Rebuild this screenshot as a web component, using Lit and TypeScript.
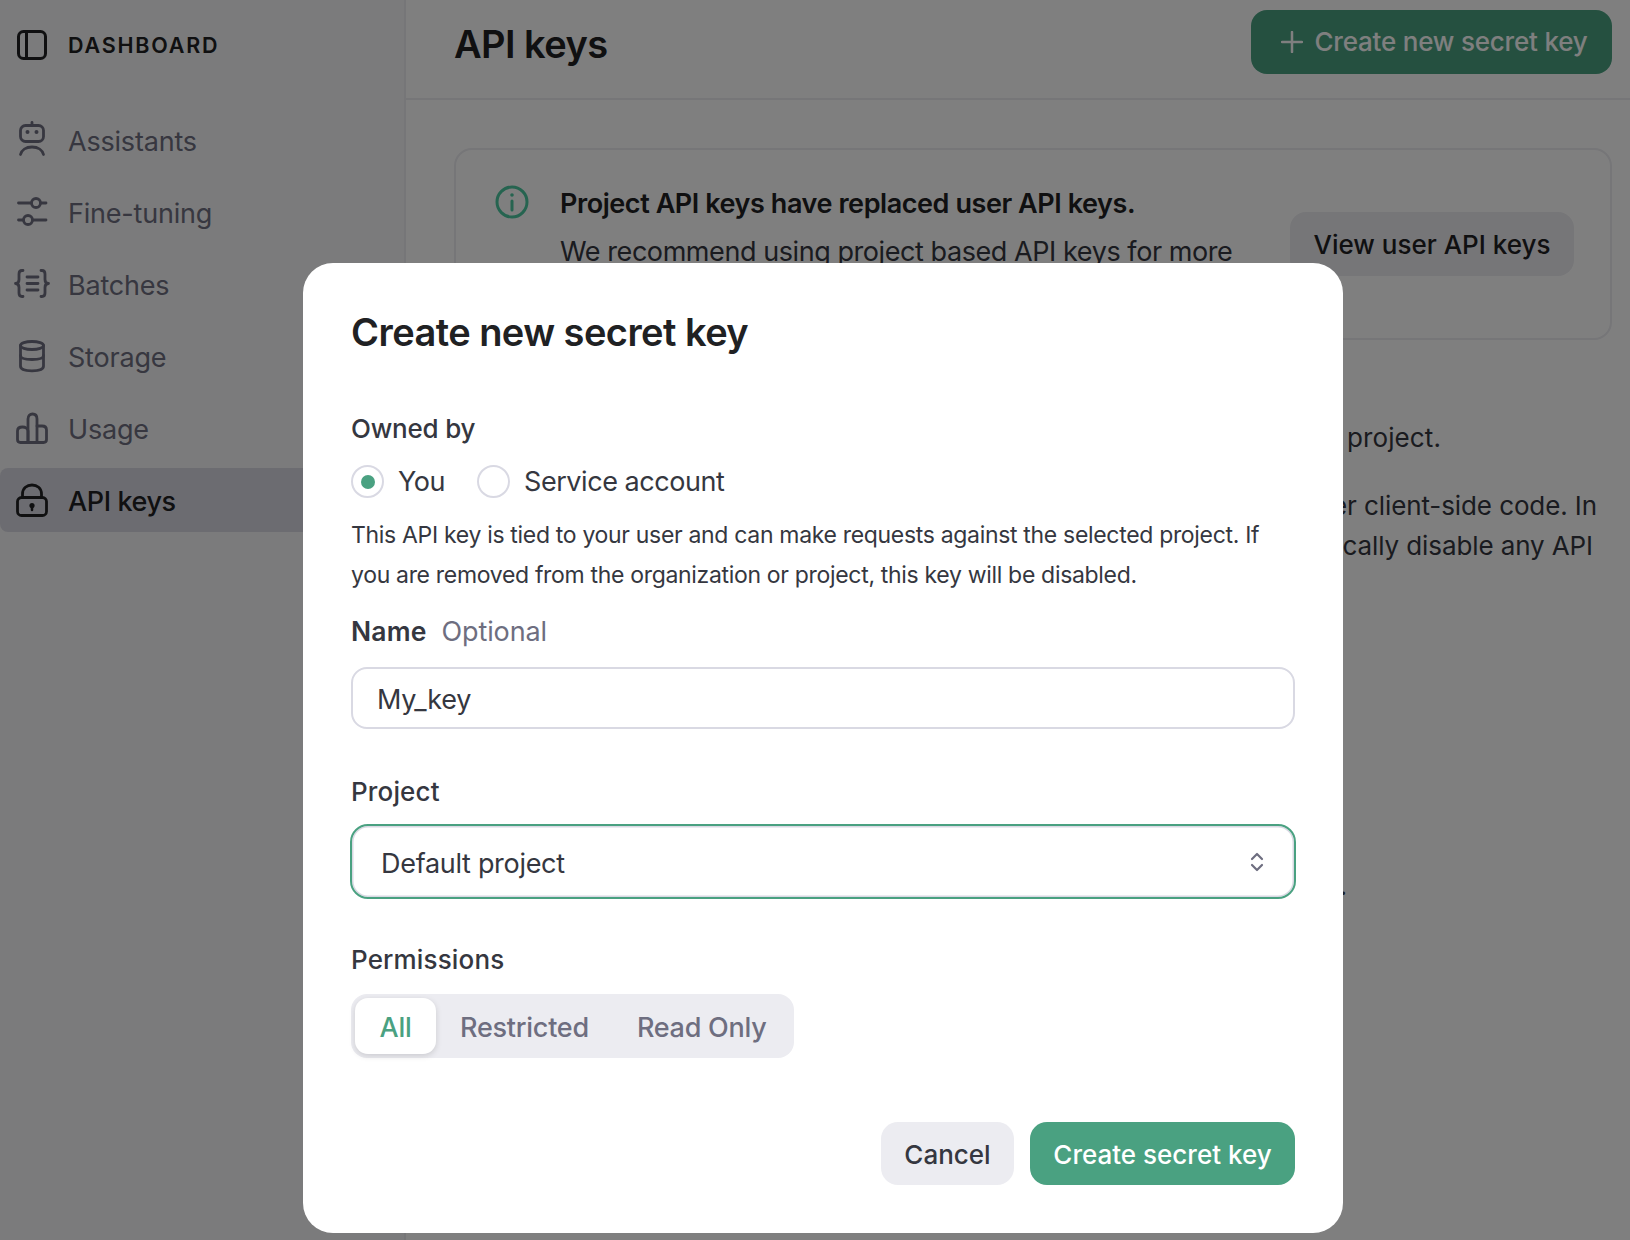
import { LitElement, html, css, svg } from "lit";
import { customElement } from "lit/decorators.js";

const ic = (body: unknown) => html`<svg class="ic" viewBox="0 0 36 36" width="36" height="36" fill="none" stroke="currentColor" stroke-width="2.800" stroke-linecap="round" stroke-linejoin="round">${body}</svg>`;

const icons: Record<string, unknown> = {
  Assistants: svg`<rect x="6.500" y="2.500" width="23" height="16" rx="5"/><path d="M18 -0.500V2.500"/><circle cx="13.500" cy="9" r="2" fill="currentColor" stroke="none"/><circle cx="22.500" cy="9" r="2" fill="currentColor" stroke="none"/><path d="M6.500 31.500C7.500 27 12 24 18 24C24 24 28.500 27 29.500 31.500"/>`,
  "Fine-tuning": svg`<path d="M4.500 8H17M27 8H32"/><circle cx="22" cy="8" r="4.500"/><path d="M4.500 25H9M19 25H32"/><circle cx="14" cy="25" r="4.500"/>`,
  Batches: svg`<path d="M9 3.500H8C5.800 3.500 5 5 5 7V12.500C5 15 4 16.500 1.500 16.500C4 16.500 5 18 5 20.500V26C5 28 5.800 29.500 8 29.500H9"/><path d="M27 3.500H28C30.200 3.500 31 5 31 7V12.500C31 15 32 16.500 34.500 16.500C32 16.500 31 18 31 20.500V26C31 28 30.200 29.500 28 29.500H27"/><path d="M13 10H24M13 16.500H24M13 23H24"/>`,
  Storage: svg`<ellipse cx="18" cy="6.500" rx="11.500" ry="4"/><path d="M6.500 6.500V27C6.500 30.500 11 31.800 18 31.800C25 31.800 29.500 30.500 29.500 27V6.500"/><path d="M6.500 16.500C6.500 19.500 11 20.500 18 20.500C25 20.500 29.500 19.500 29.500 16.500"/>`,
  Usage: svg`<path d="M14 31.500H6.500C4.500 31.500 3.500 30.500 3.500 28.500V20C3.500 17.500 5.500 16 8.500 16C11.500 16 14 17.500 14 20V31.500Z"/><path d="M14 31.500V8C14 4.500 16 3 18.500 3C21 3 23 4.500 23 8V31.500Z"/><path d="M23 15H28C31 15 32.500 16.500 32.500 19V28.500C32.500 30.500 31.500 31.500 29.500 31.500H23"/>`,
  "API keys": svg`<rect x="3.500" y="14.500" width="29" height="18" rx="4"/><path d="M8.500 14.500V11C8.500 5 13 2 18 2C23 2 27.500 5 27.500 11V14.500"/><circle cx="18" cy="22.500" r="2.600" fill="currentColor" stroke="none"/><path d="M18 23V27" stroke-width="2.500"/>`,
};

const nav = ["Assistants", "Fine-tuning", "Batches", "Storage", "Usage", "API keys"];

@customElement("app-root")
export class AppRoot extends LitElement {
  static styles = css`
    :host {
      display: block;
      position: relative;
      width: 1630px;
      height: 1240px;
      overflow: hidden;
      background: #fff;
      font-family: Inter, "Liberation Sans", sans-serif;
      color: #353740;
      --green: #4aa181;
      --line: #ececf1;
    }
    * { box-sizing: border-box; }
    .page { display: flex; height: 1240px; }
    .side {
      width: 406px;
      flex: none;
      background: #f7f7f8;
      border-right: 2px solid var(--line);
    }
    .brand {
      height: 90px;
      display: flex;
      align-items: center;
      gap: 21px;
      padding-left: 17px;
      color: #202123;
      font-size: 21.500px;
      font-weight: 600;
      letter-spacing: 1.800px;
    }
    .nav { margin-top: 18px; display: flex; flex-direction: column; gap: 8px; }
    .item {
      height: 64px;
      display: flex;
      align-items: center;
      gap: 18px;
      padding: 2px 0 0 14px;
      border-radius: 8px;
      color: #6e6e80;
      font-size: 27px;
      letter-spacing: -0.200px;
    }
    .item .ic { overflow: visible; }
    .item.on { background: #d9d9e3; color: #202123; font-weight: 500; letter-spacing: -0.400px; }
    .ic { flex: none; display: block; }
    .main { flex: 1; min-width: 0; }
    .head {
      height: 100px;
      display: flex;
      justify-content: space-between;
      align-items: flex-start;
      padding: 10px 18px 0 48px;
      border-bottom: 2px solid var(--line);
    }
    h1 {
      margin: 0;
      font-size: 38px;
      line-height: 68px;
      font-weight: 600;
      color: #202123;
      letter-spacing: -0.550px;
    }
    .btn {
      display: flex;
      align-items: center;
      justify-content: center;
      border-radius: 16px;
      font-size: 26px;
      font-weight: 500;
      white-space: nowrap;
    }
    .new {
      width: 361px;
      height: 64px;
      gap: 11px;
      background: var(--green);
      color: #fff;
      padding: 0 0 1px 6px;
      letter-spacing: -0.200px;
    }
    .card {
      margin: 48px 18px 0 48px;
      height: 192px;
      border: 2px solid var(--line);
      border-radius: 18px;
      display: flex;
      align-items: center;
      padding: 0 36px 0 39px;
      overflow: hidden;
    }
    .info { flex: none; color: #4cc8a0; align-self: flex-start; margin-top: 35px; }
    .card-text {
      flex: 1;
      min-width: 0;
      padding-left: 31px;
      font-size: 27px;
      line-height: 48px;
      letter-spacing: -0.430px;
      height: 144px;
      align-self: flex-start;
      margin-top: 30px;
    }
    .card-text b { display: block; font-weight: 600; color: #202123; }
    .view {
      flex: none;
      width: 284px;
      height: 64px;
      background: var(--line);
      color: #202123;
    }
    .copy {
      margin-top: 78px;
      padding-right: 33px;
      font-size: 26px;
      line-height: 40px;
      letter-spacing: -0.100px;
    }
    .copy div { text-align: right; white-space: nowrap; }
    .copy .l1 { padding-right: 156px; letter-spacing: 0.100px; }
    .copy .p2 { margin-top: 28px; }
    .copy .l2b { padding-right: 4px; }
    .copy .l3 { margin-top: 300px; padding-right: 250px; }

    .overlay {
      position: absolute;
      inset: 0;
      background: rgba(0, 0, 0, 0.5);
      padding: 263px 0 0 303px;
    }
    .modal {
      width: 1040px;
      height: 970px;
      background: #fff;
      border-radius: 30px;
      padding: 45px 48px 48px;
      display: flex;
      flex-direction: column;
    }
    h2 {
      margin: 0;
      font-size: 38px;
      line-height: 48px;
      font-weight: 600;
      color: #202123;
      letter-spacing: -0.550px;
    }
    .lab {
      font-size: 26px;
      line-height: 40px;
      font-weight: 500;
      letter-spacing: 0.150px;
    }
    .lab .opt { color: #6e6e80; font-weight: 400; margin-left: 15px; font-size: 27px; letter-spacing: -0.100px; }
    .lab.owned { margin-top: 53px; letter-spacing: -0.200px; }
    .lab.name { margin-top: 16px; font-weight: 600; font-size: 26.500px; }
    .lab.project { margin-top: 43px; }
    .lab.perm { margin-top: 41px; }
    .radios {
      margin-top: 16px;
      height: 34px;
      display: flex;
      align-items: center;
      font-size: 27px;
      letter-spacing: -0.450px;
    }
    .radio {
      width: 33px;
      height: 33px;
      flex: none;
      border: 2px solid #d9d9e3;
      border-radius: 50%;
      display: flex;
      align-items: center;
      justify-content: center;
      margin-right: 14px;
    }
    .radio i { width: 14px; height: 14px; border-radius: 50%; background: var(--green); }
    .radio.second { margin-left: 32px; }
    .desc {
      margin: 17px 0 0;
      font-size: 23px;
      line-height: 40px;
      letter-spacing: -0.320px;
    }
    .input {
      margin-top: 15px;
      width: 944px;
      height: 62px;
      flex: none;
      border: 2px solid #d9d9e3;
      border-radius: 16px;
      padding: 2px 0 0 24px;
      display: flex;
      align-items: center;
      font-size: 27px;
      letter-spacing: -0.200px;
    }
    .select {
      margin: 12px 0 0 -1px;
      width: 946px;
      height: 75px;
      flex: none;
      border: 2px solid var(--green);
      border-radius: 18px;
      box-shadow: inset 0 0 0 1.500px #d9d9e3;
      padding: 4px 30px 0 29px;
      display: flex;
      align-items: center;
      justify-content: space-between;
      font-size: 27px;
      letter-spacing: -0.300px;
    }
    .select .chev { margin-top: -4px; }
    .chev { color: #6e6e80; display: block; }
    .seg {
      margin-top: 14px;
      width: 443px;
      height: 64px;
      flex: none;
      background: var(--line);
      border-radius: 16px;
      padding: 4px;
      display: flex;
      align-items: center;
      font-size: 27px;
      font-weight: 500;
      color: #6e6e80;
      letter-spacing: -0.250px;
    }
    .seg span { height: 56px; padding-top: 2px; display: flex; align-items: center; justify-content: center; }
    .seg .all {
      width: 81px;
      background: #fff;
      border-radius: 13px;
      color: var(--green);
      box-shadow: 0 2px 6px rgba(0, 0, 0, 0.14);
    }
    .seg .res { margin-left: 24px; }
    .seg .ro { margin-left: 48px; }
    .actions {
      margin-top: 64px;
      display: flex;
      justify-content: flex-end;
      gap: 16px;
    }
    .actions .btn { height: 63px; padding-top: 2px; border-radius: 17px; }
    .cancel { width: 133px; background: var(--line); color: #353740; }
    .create { width: 265px; background: var(--green); color: #fff; }
  `;

  render() {
    return html`
      <div class="page">
        <aside class="side">
          <div class="brand">
            <svg class="ic" viewBox="0 0 30 30" width="30" height="30" fill="none" stroke="currentColor" stroke-width="3" stroke-linejoin="round"><rect x="1.500" y="1.500" width="27" height="27" rx="5"/><path d="M9.500 1.500V28.500"/></svg>
            <span>DASHBOARD</span>
          </div>
          <nav class="nav">
            ${nav.map((n) => html`<div class="item ${n === "API keys" ? "on" : ""}">${ic(icons[n])}<span>${n}</span></div>`)}
          </nav>
        </aside>
        <main class="main">
          <header class="head">
            <h1>API keys</h1>
            <div class="btn new">
              <svg viewBox="0 0 22 22" width="22" height="22" fill="none" stroke="currentColor" stroke-width="2.500" stroke-linecap="round"><path d="M11 1V21M1 11H21"/></svg>
              <span>Create new secret key</span>
            </div>
          </header>
          <section class="card">
            <svg class="info" viewBox="0 0 34 34" width="34" height="34" fill="none" stroke="currentColor" stroke-width="3" stroke-linecap="round"><circle cx="17" cy="17" r="15"/><path d="M17 16V25"/><circle cx="17" cy="10" r="1.800" fill="currentColor" stroke="none"/></svg>
            <div class="card-text">
              <b>Project API keys have replaced user API keys.</b>
              We recommend using project based API keys for more granular control over your resources.
            </div>
            <div class="btn view">View user API keys</div>
          </section>
          <section class="copy">
            <div class="l1">Your secret API keys are listed below for this project.</div>
            <div class="p2">Do not share your API key with others, or expose it in the browser or other client-side code. In</div>
            <div class="l2b">order to protect the security of your account, OpenAI may also automatically disable any API</div>
            <div class="l3">Enable tracking to see usage per API key on the Usage page.</div>
          </section>
        </main>
      </div>
      <div class="overlay">
        <div class="modal">
          <h2>Create new secret key</h2>
          <div class="lab owned">Owned by</div>
          <div class="radios">
            <span class="radio"><i></i></span><span>You</span>
            <span class="radio second"></span><span>Service account</span>
          </div>
          <p class="desc">This API key is tied to your user and can make requests against the selected project. If<br />you are removed from the organization or project, this key will be disabled.</p>
          <div class="lab name">Name<span class="opt">Optional</span></div>
          <div class="input">My_key</div>
          <div class="lab project">Project</div>
          <div class="select">
            <span>Default project</span>
            <svg class="chev" viewBox="0 0 14 20" width="14" height="20" fill="none" stroke="currentColor" stroke-width="2.200" stroke-linecap="round" stroke-linejoin="round"><path d="M2 7L7 2L12 7M2 13L7 18L12 13"/></svg>
          </div>
          <div class="lab perm">Permissions</div>
          <div class="seg"><span class="all">All</span><span class="res">Restricted</span><span class="ro">Read Only</span></div>
          <div class="actions">
            <div class="btn cancel">Cancel</div>
            <div class="btn create">Create secret key</div>
          </div>
        </div>
      </div>
    `;
  }
}
